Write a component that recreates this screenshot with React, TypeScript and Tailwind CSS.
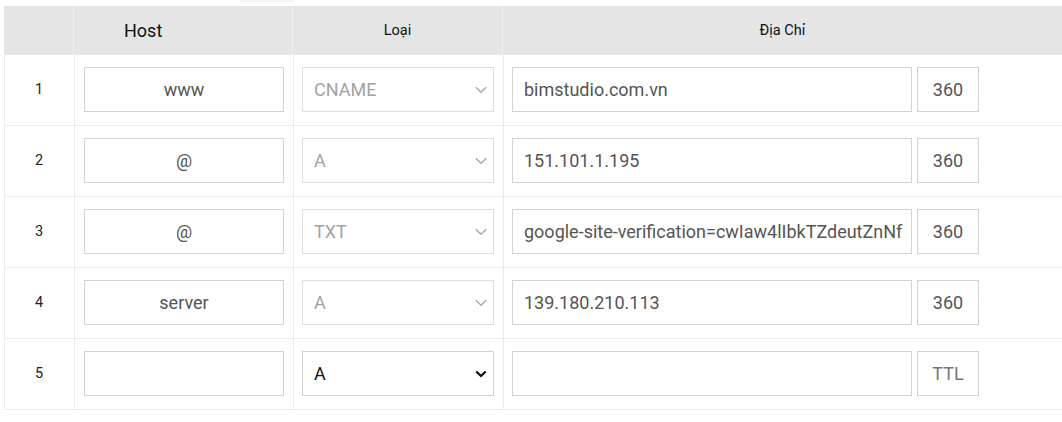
import React from "react";

type Row = { n: number; host: string; type: string; addr: string; ttl: string; disabled: boolean };

const rows: Row[] = [
  { n: 1, host: "www", type: "CNAME", addr: "bimstudio.com.vn", ttl: "360", disabled: true },
  { n: 2, host: "@", type: "A", addr: "151.101.1.195", ttl: "360", disabled: true },
  { n: 3, host: "@", type: "TXT", addr: "google-site-verification=cwIaw4lIbkTZdeutZnNf", ttl: "360", disabled: true },
  { n: 4, host: "server", type: "A", addr: "139.180.210.113", ttl: "360", disabled: true },
  { n: 5, host: "", type: "A", addr: "", ttl: "", disabled: false },
];

function Chevron({ disabled }: { disabled: boolean }) {
  return disabled ? (
    <svg width="12" height="8" viewBox="0 0 12 8" className="absolute right-[6px] top-1/2 -translate-y-1/2 pointer-events-none">
      <path d="M0.8 1.2 L6 6.2 L11.2 1.2" fill="none" stroke="#a8a8a8" strokeWidth="1.4" />
    </svg>
  ) : (
    <svg width="12" height="8" viewBox="0 0 12 8" className="absolute right-[6px] top-1/2 -translate-y-1/2 pointer-events-none">
      <path d="M1.3 1.5 L6 6 L10.7 1.5" fill="none" stroke="#111" strokeWidth="2.3" />
    </svg>
  );
}

export default function App() {
  return (
    <div className="w-[1062px] h-[422px] bg-white overflow-hidden relative" style={{ fontFamily: "Roboto, 'Liberation Sans', sans-serif" }}>
      <div className="h-[6px] flex">
        <div className="ml-[240px] w-[54px] h-[2px] bg-[#f6f6f6]" />
      </div>
      <div className="ml-[4px] w-[1100px]">
        <div className="grid grid-cols-[70px_219px_210px_1fr] h-[49px] bg-[#e5e5e5]">
          <div className="border-r border-[#f0f0f0]" />
          <div className="border-r border-[#f0f0f0] flex items-center pl-[50px] text-[18px] text-[#111]">Host</div>
          <div className="border-r border-[#f0f0f0] flex items-center justify-center text-[14.5px] text-[#111]">Loại</div>
          <div className="flex items-center justify-center text-[14.5px] text-[#111] pr-[42px]">Địa Chỉ</div>
        </div>
        {rows.map((r) => (
          <div key={r.n} className="grid grid-cols-[70px_219px_210px_1fr] h-[71px] border-b border-[#ececec] border-l">
            <div className="flex items-center justify-center text-[14.5px] text-[#222] border-r border-[#ececec] -ml-px">{r.n}</div>
            <div className="border-r border-[#ececec] pl-[9px] pt-[12px]">
              <div className="w-[200px] h-[45px] border border-[#d2d2d2] flex items-center justify-center text-[18px] text-[#555]">
                {r.host}
              </div>
            </div>
            <div className="border-r border-[#ececec] pl-[8px] pt-[12px]">
              <div className={`relative w-[192px] h-[45px] border ${r.disabled ? "border-[#dedede]" : "border-[#d2d2d2]"} flex items-center pl-[11px] text-[18px] ${r.disabled ? "text-[#a3a3a3]" : "text-[#111]"}`}>
                {r.type}
                <Chevron disabled={r.disabled} />
              </div>
            </div>
            <div className="pl-[8px] pt-[12px] flex gap-[5px]">
              <div className="w-[400px] h-[45px] border border-[#d2d2d2] flex items-center px-[11px] text-[18px] text-[#555] overflow-hidden whitespace-nowrap">
                {r.addr}
              </div>
              <div className="w-[62px] h-[45px] border border-[#d2d2d2] flex items-center justify-center text-[18px] text-[#555]">
                {r.ttl || <span className="text-[#777]">TTL</span>}
              </div>
            </div>
          </div>
        ))}
      </div>
    </div>
  );
}
